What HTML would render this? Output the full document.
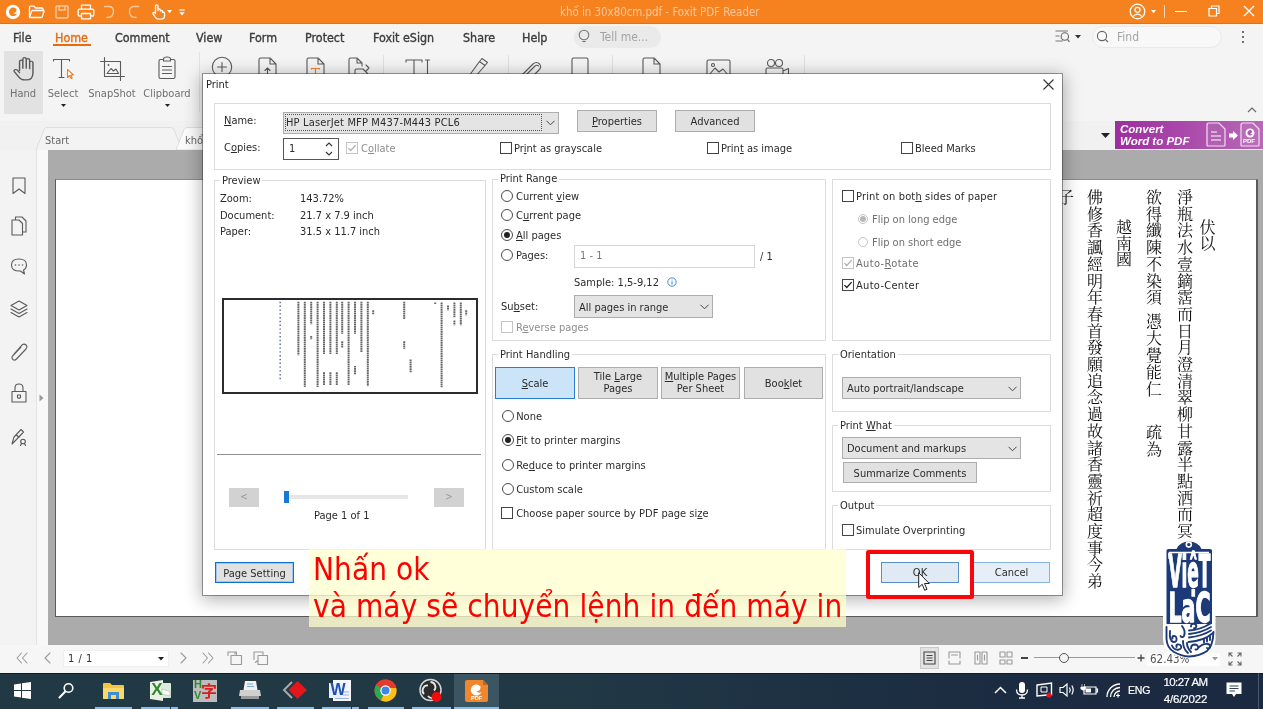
<!DOCTYPE html>
<html lang="vi">
<head>
<meta charset="utf-8">
<title>khổ in 30x80cm.pdf - Foxit PDF Reader</title>
<style>
*{box-sizing:border-box;margin:0;padding:0}
html,body{width:1263px;height:709px;overflow:hidden;background:#ababab}
body{position:relative;will-change:transform;font-family:"DejaVu Sans Condensed","DejaVu Sans","Liberation Sans",sans-serif;font-size:11px;color:#2b2b2b}
.abs{position:absolute;white-space:nowrap}
svg{position:absolute;overflow:visible}
.t{height:14px;line-height:14px}
u{text-decoration:underline;text-underline-offset:1px;text-decoration-thickness:1px}
/* dialog */
#dlg{background:#fff;background-clip:padding-box;border:1px solid rgba(30,30,30,.42);box-shadow:0 3px 16px 1px rgba(0,0,0,.30)}
.gb{border:1px solid #dcdcdc}
.lg{background:#fff;padding:0 2px}
.btn{background:#e1e1e1;border:1px solid #adadad;text-align:center}
.cb{border:1px solid #444;background:#fff}
.cb.dis{border-color:#c4c4c4}
.rd{border:1px solid #4a4a4a;border-radius:50%;background:#fff}
.rd.dis{border-color:#c4c4c4}
.dot{border-radius:50%;background:#222}
.combo{background:#e4e4e4;border:1px solid #adadad}
.dis{color:#8f8f8f}
/* app */
.menu{font-size:12.4px;color:#3c3c3c;height:26px;line-height:27px;-webkit-text-stroke:0.35px #3c3c3c}
.rl{font-size:11px;color:#707070;text-align:center}

</style>
</head>
<body>
<div class="abs" style="left:0px;top:0px;width:1263px;height:24px;background:#f5821f;border-bottom:1.5px solid #de730f"></div>
<div class="abs" style="left:560px;top:0;height:24px;line-height:25px;font-size:11.4px;color:#fac79c">khổ in 30x80cm.pdf - Foxit PDF Reader</div>
<svg style="left:5px;top:4px;" width="16" height="16" viewBox="0 0 16 16"><circle cx="8" cy="8" r="7.2" fill="#fff"/><path d="M11.6 5.2A4.3 4.3 0 1 0 12.2 9.6C10.8 10.6 9 10 8.4 8.8C9.6 9.3 11.6 8.2 11.6 5.2Z" fill="#f5821f"/></svg>
<svg style="left:28px;top:5px;" width="17" height="14" viewBox="0 0 17 14"><path d="M1.5 12.5V2.2Q1.5 1.2 2.5 1.2H6L7.5 3H14Q15 3 15 4V5.5M1.5 12.5L3.6 6.4Q3.9 5.5 4.8 5.5H15.3Q16.3 5.5 16 6.5L14.3 11.7Q14 12.5 13 12.5Z" fill="none" stroke="#fff" stroke-width="1.3" stroke-linecap="round" stroke-linejoin="round"/></svg>
<svg style="left:55px;top:5px;" width="14" height="14" viewBox="0 0 14 14"><path d="M1 2Q1 1 2 1H12Q13 1 13 2V12Q13 13 12 13H2Q1 13 1 12ZM4 1V5H10V1" fill="none" stroke="#fbc89a" stroke-width="1.4" stroke-linecap="round" stroke-linejoin="round"/></svg>
<svg style="left:77px;top:4px;" width="18" height="16" viewBox="0 0 18 16"><path d="M4.5 5V1.2H13.5V5M4.5 12H2.5Q1.2 12 1.2 10.7V6.5Q1.2 5.2 2.5 5.2H15.5Q16.8 5.2 16.8 6.5V10.7Q16.8 12 15.500 12H13.5M4.500 9.500H13.5V14.800H4.500Z" fill="none" stroke="#fff" stroke-width="1.3" stroke-linecap="round" stroke-linejoin="round"/></svg>
<svg style="left:103px;top:5px;" width="12" height="14" viewBox="0 0 12 14"><path d="M1.5 1.5H5.500Q10.500 1.500 10.500 6.500Q10.500 12.500 4 12.500" fill="none" stroke="#fbc89a" stroke-width="1.4" stroke-linecap="round" stroke-linejoin="round"/></svg>
<svg style="left:128px;top:5px;" width="12" height="14" viewBox="0 0 12 14"><path d="M10.500 1.500H6.500Q1.500 1.500 1.500 6.500Q1.500 12.500 8 12.500" fill="none" stroke="#fbc89a" stroke-width="1.4" stroke-linecap="round" stroke-linejoin="round"/></svg>
<svg style="left:150px;top:3px;" width="18" height="18" viewBox="0 0 18 18"><path d="M5.500 10V3.200Q5.500 1.800 6.800 1.800Q8 1.800 8 3.200V7.500M8 7.500V6.300Q9.300 5.300 10.300 6.500V8M10.300 8Q11.600 7 12.600 8.200V9.500Q14.400 8.800 14.600 10.500V12.500Q14.600 16.200 11 16.200H9Q6.500 16.200 5.200 14L3 10.800Q2.600 9.600 3.800 9.400Q4.600 9.400 5.500 10.600" fill="none" stroke="#fff" stroke-width="1.3" stroke-linecap="round" stroke-linejoin="round"/></svg>
<svg style="left:167px;top:9.5px;" width="5" height="3.5" viewBox="0 0 5 3.5"><path d="M0 0H5L2.500 3.200Z" fill="#fff"/></svg>
<svg style="left:179px;top:8.5px;" width="6" height="7" viewBox="0 0 6 7"><path d="M0.300 1H5.700" stroke="#fff" stroke-width="1.200" fill="none"/><path d="M0.300 3.200H5.700L3 6.500Z" fill="#fff"/></svg>
<svg style="left:1129px;top:3px;" width="17" height="17" viewBox="0 0 17 17"><circle cx="8.500" cy="8.500" r="7.300" fill="none" stroke="#fff" stroke-width="1.3" stroke-linecap="round" stroke-linejoin="round"/><circle cx="8.500" cy="6.800" r="2.500" fill="none" stroke="#fff" stroke-width="1.3" stroke-linecap="round" stroke-linejoin="round"/><path d="M3.800 13.600Q8.500 8.500 13.200 13.600" fill="none" stroke="#fff" stroke-width="1.3" stroke-linecap="round" stroke-linejoin="round"/></svg>
<svg style="left:1151px;top:9.5px;" width="5" height="3.5" viewBox="0 0 5 3.5"><path d="M0 0H5L2.500 3.200Z" fill="#fff"/></svg>
<div class="abs" style="left:1164px;top:5px;width:1px;height:13px;background:#fbd9bd"></div>
<div class="abs" style="left:1175px;top:11px;width:12px;height:1px;background:#fff"></div>
<svg style="left:1208px;top:5px;" width="12" height="12" viewBox="0 0 12 12"><path d="M1 3.500H8.500V11H1ZM3.500 3.500V1H11V8.500H8.500" fill="none" stroke="#fff" stroke-width="1.200"/></svg>
<svg style="left:1243px;top:5px;" width="12" height="12" viewBox="0 0 12 12"><path d="M1 1L11 11M11 1L1 11" stroke="#fff" stroke-width="1.300" fill="none"/></svg>
<div class="abs" style="left:0px;top:24px;width:1263px;height:97px;background:#f4f4f4;border-top:1px solid #fdf1e2"></div>
<div class="abs menu" style="left:13px;top:24px">File</div>
<div class="abs menu" style="left:115px;top:24px">Comment</div>
<div class="abs menu" style="left:196px;top:24px">View</div>
<div class="abs menu" style="left:249px;top:24px">Form</div>
<div class="abs menu" style="left:305px;top:24px">Protect</div>
<div class="abs menu" style="left:373px;top:24px">Foxit eSign</div>
<div class="abs menu" style="left:463px;top:24px">Share</div>
<div class="abs menu" style="left:522px;top:24px">Help</div>
<div class="abs menu" style="left:55px;top:24px;color:#ea6b0e;-webkit-text-stroke-color:#ea6b0e">Home</div>
<div class="abs" style="left:53px;top:44px;width:38px;height:2px;background:#ea6b0e"></div>
<div class="abs" style="left:574px;top:26px;width:87px;height:22px;background:#eaeaea;border-radius:11px"></div>
<svg style="left:578px;top:29px;" width="12" height="15" viewBox="0 0 12 15"><circle cx="6" cy="6" r="4.800" fill="none" stroke="#777" stroke-width="1.100"/><path d="M4.300 12.500H7.700" stroke="#777" stroke-width="1.100"/></svg>
<div class="abs" style="left:600px;top:24px;height:26px;line-height:26px;font-size:12px;color:#a3a3a3">Tell me...</div>
<svg style="left:1055px;top:30px;" width="16" height="13" viewBox="0 0 16 13"><path d="M0.500 1H13M0.500 6H4.500M0.500 11H8" stroke="#777" stroke-width="1.100" fill="none"/><circle cx="9.800" cy="6.500" r="3.700" fill="none" stroke="#666" stroke-width="1.100"/><path d="M12.400 9.300L14.500 11.800" stroke="#666" stroke-width="1.200"/></svg>
<svg style="left:1075px;top:35px;" width="6" height="4" viewBox="0 0 6 4"><path d="M0 0H6L3 3.500Z" fill="#333"/></svg>
<div class="abs" style="left:1092px;top:26px;width:130px;height:22px;background:#f8f8f8;border:1px solid #e9e9e9;border-radius:11px"></div>
<svg style="left:1096px;top:30px;" width="13" height="13" viewBox="0 0 13 13"><circle cx="6" cy="6" r="4.600" fill="none" stroke="#666" stroke-width="1.100"/><path d="M9.300 9.300L12 12" stroke="#666" stroke-width="1.200"/></svg>
<div class="abs" style="left:1117px;top:24px;height:26px;line-height:26px;font-size:12px;color:#a3a3a3">Find</div>
<div class="abs" style="left:1242px;top:31px;width:2px;height:2px;background:#444;border-radius:1px"></div>
<div class="abs" style="left:1242px;top:36px;width:2px;height:2px;background:#444;border-radius:1px"></div>
<div class="abs" style="left:1242px;top:41px;width:2px;height:2px;background:#444;border-radius:1px"></div>
<div class="abs" style="left:4px;top:51px;width:39px;height:63px;background:#e2e2e2"></div>
<div class="abs rl" style="left:-12px;top:86px;width:70px;height:16px;line-height:16px">Hand</div>
<div class="abs rl" style="left:28px;top:86px;width:70px;height:16px;line-height:16px">Select</div>
<div class="abs rl" style="left:77px;top:86px;width:70px;height:16px;line-height:16px">SnapShot</div>
<div class="abs rl" style="left:132px;top:86px;width:70px;height:16px;line-height:16px">Clipboard</div>
<svg style="left:60.5px;top:104px;" width="5" height="3" viewBox="0 0 5 3"><path d="M0 0H5L2.500 3Z" fill="#222"/></svg>
<svg style="left:164.5px;top:104px;" width="5" height="3" viewBox="0 0 5 3"><path d="M0 0H5L2.500 3Z" fill="#222"/></svg>
<svg style="left:13px;top:56.5px;" width="21" height="23.5" viewBox="1.500 1 16 21" preserveAspectRatio="none"><path d="M6.500 13V5.200Q6.500 3.800 7.800 3.800Q9 3.800 9 5.200V11M9 11V3Q9 1.600 10.300 1.600Q11.600 1.600 11.600 3V11M11.600 11V3.800Q11.600 2.500 12.900 2.500Q14.200 2.500 14.200 3.800V11.500M14.200 11.500V6Q14.200 4.800 15.400 4.800Q16.700 4.800 16.700 6V15Q16.700 21.500 11.500 21.500H10.500Q7.500 21.500 6 19L2.500 14Q2 12.600 3.200 12.200Q4.300 12 5 13L6.500 15" fill="none" stroke="#5a5a5a" stroke-width="1.1" stroke-linecap="round" stroke-linejoin="round"/></svg>
<svg style="left:52px;top:58px;" width="24" height="22" viewBox="0 0 24 22"><path d="M1.500 3V1.500H17.500V3M9.500 1.500V19.500M7 19.500H12" fill="none" stroke="#5a5a5a" stroke-width="1.1" stroke-linecap="round" stroke-linejoin="round"/><path d="M15.500 11.500V19.500L17.500 17.500L19 20.500L20.200 20L18.800 17H21.500Z" fill="#fff" stroke="#e9822c" stroke-width="1.100" stroke-linejoin="round"/></svg>
<svg style="left:100px;top:57px;" width="25" height="24" viewBox="0 0 25 24"><path d="M4.500 0.500V19.500H24.500M0.500 4.500H20.500V23.500" fill="none" stroke="#5a5a5a" stroke-width="1.1" stroke-linecap="round" stroke-linejoin="round"/><path d="M7 16.500L11 11.500L13.500 14L16 12L18.500 16.500Z" fill="none" stroke="#5a5a5a" stroke-width="1.1" stroke-linecap="round" stroke-linejoin="round"/><circle cx="8.500" cy="8" r="0.900" fill="#5a5a5a"/></svg>
<svg style="left:158px;top:56px;" width="18" height="24" viewBox="0 0 18 24"><path d="M5 3.500H2.500Q1 3.500 1 5V21Q1 22.500 2.500 22.500H15.500Q17 22.500 17 21V5Q17 3.500 15.500 3.500H13M5.500 5V3Q5.500 1 9 1Q12.500 1 12.500 3V5ZM4.500 10.500H13.500M4.500 14H13.500M4.500 17.500H13.500" fill="none" stroke="#5a5a5a" stroke-width="1.1" stroke-linecap="round" stroke-linejoin="round"/></svg>
<div class="abs" style="left:199px;top:52px;width:1px;height:60px;background:#e3e3e3"></div>
<svg style="left:211px;top:56px;" width="22" height="22" viewBox="0 0 22 22"><circle cx="11" cy="11" r="9.700" fill="none" stroke="#5a5a5a" stroke-width="1.1" stroke-linecap="round" stroke-linejoin="round"/><path d="M11 6.500V15.500M6.500 11H15.500" fill="none" stroke="#5a5a5a" stroke-width="1.1" stroke-linecap="round" stroke-linejoin="round"/></svg>
<svg style="left:258px;top:57px;" width="19" height="24" viewBox="0 0 19 24"><path d="M1 22V2.500Q1 1 2.500 1H12L18 7V22M12 1V7H18M9.500 19V11M7 13.500L9.500 11L12 13.500" fill="none" stroke="#5a5a5a" stroke-width="1.1" stroke-linecap="round" stroke-linejoin="round"/></svg>
<svg style="left:306px;top:57px;" width="19" height="24" viewBox="0 0 19 24"><path d="M1 22V2.500Q1 1 2.500 1H12L18 7V22M12 1V7H18" fill="none" stroke="#5a5a5a" stroke-width="1.1" stroke-linecap="round" stroke-linejoin="round"/><path d="M5.500 12.500V11.500H13.500V12.500M9.500 11.500V19" fill="none" stroke="#e9822c" stroke-width="1.200"/></svg>
<svg style="left:348px;top:57px;" width="22" height="24" viewBox="0 0 22 24"><path d="M1 22V2.500Q1 1 2.500 1H9L14 6V9M9 1V6H14M7 22V13.500Q7 12 8.500 12H15L19.500 16.500V22M21 11L18 8M21 11L18 14" fill="none" stroke="#5a5a5a" stroke-width="1.1" stroke-linecap="round" stroke-linejoin="round"/></svg>
<div class="abs" style="left:383px;top:55px;width:1px;height:20px;background:#e0e0e0"></div>
<svg style="left:405px;top:59px;" width="28" height="18" viewBox="0 0 28 18"><path d="M1 3V1H17V3M9 1V18M22.500 1V18M20.500 1H24.500" fill="none" stroke="#5a5a5a" stroke-width="1.1" stroke-linecap="round" stroke-linejoin="round"/></svg>
<svg style="left:466px;top:57px;" width="24" height="20" viewBox="0 0 24 20"><path d="M3 19L13.500 4.500L19 8.500L9 20M13.500 4.500L16 1.500L21.500 5.500L19 8.500" fill="none" stroke="#5a5a5a" stroke-width="1.1" stroke-linecap="round" stroke-linejoin="round"/></svg>
<div class="abs" style="left:508px;top:55px;width:1px;height:20px;background:#e0e0e0"></div>
<svg style="left:518px;top:59px;" width="26" height="18" viewBox="0 0 26 18"><path d="M3 17L15 5Q18.500 2 21.500 5Q24 8 21 11L12 20M7 17L17 7Q19 5.500 20.500 7" fill="none" stroke="#5a5a5a" stroke-width="1.1" stroke-linecap="round" stroke-linejoin="round"/></svg>
<svg style="left:571px;top:57px;" width="18" height="22" viewBox="0 0 18 22"><path d="M1 22V2.500Q1 1 2.500 1H15.500Q17 1 17 2.500V22" fill="none" stroke="#5a5a5a" stroke-width="1.1" stroke-linecap="round" stroke-linejoin="round"/></svg>
<div class="abs" style="left:612px;top:55px;width:1px;height:20px;background:#e0e0e0"></div>
<svg style="left:642px;top:57px;" width="19" height="22" viewBox="0 0 19 22"><path d="M1 22V2.500Q1 1 2.500 1H12L18 7V22M12 1V7H18" fill="none" stroke="#5a5a5a" stroke-width="1.1" stroke-linecap="round" stroke-linejoin="round"/></svg>
<svg style="left:706px;top:59px;" width="25" height="18" viewBox="0 0 25 18"><path d="M1 18V2.500Q1 1 2.500 1H22.500Q24 1 24 2.500V18M3 16L9 9L13 13L17 10L22 16" fill="none" stroke="#5a5a5a" stroke-width="1.1" stroke-linecap="round" stroke-linejoin="round"/><circle cx="7" cy="6" r="1.500" fill="none" stroke="#5a5a5a" stroke-width="1.1" stroke-linecap="round" stroke-linejoin="round"/></svg>
<svg style="left:764px;top:58px;" width="26" height="18" viewBox="0 0 26 18"><circle cx="7" cy="5" r="3.500" fill="none" stroke="#5a5a5a" stroke-width="1.1" stroke-linecap="round" stroke-linejoin="round"/><circle cx="15" cy="5" r="3.500" fill="none" stroke="#5a5a5a" stroke-width="1.1" stroke-linecap="round" stroke-linejoin="round"/><path d="M2 18V11.500Q2 10 3.500 10H17.500Q19 10 19 11.500V18M19 13L24.500 10.500V18" fill="none" stroke="#5a5a5a" stroke-width="1.1" stroke-linecap="round" stroke-linejoin="round"/></svg>
<div class="abs" style="left:804px;top:55px;width:1px;height:20px;background:#e0e0e0"></div>
<svg style="left:1247px;top:107px;" width="10" height="6" viewBox="0 0 10 6"><path d="M1 5L5 1L9 5" stroke="#666" stroke-width="1.100" fill="none"/></svg>
<div class="abs" style="left:0px;top:121px;width:1263px;height:29px;background:#f1f1f1"></div>
<svg style="left:0px;top:121px;" width="210" height="29" viewBox="0 0 210 29"><path d="M36 29L44 8.500Q45 6.500 47 6.500H171Q173 6.500 174 8.500L182 29" fill="#f3f3f3" stroke="#dedede" stroke-width="1"/><path d="M176 29L184 8.500Q185 6.500 187 6.500H210V29Z" fill="#fbfbfb" stroke="#dedede" stroke-width="1"/></svg>
<div class="abs" style="left:45px;top:132.8px;height:16px;line-height:16px;font-size:11px;color:#666">Start</div>
<div class="abs" style="left:185px;top:132.8px;height:16px;line-height:16px;font-size:11px;color:#666">khổ in 30x80cm.pdf</div>
<svg style="left:1101px;top:133px;" width="9" height="6" viewBox="0 0 9 6"><path d="M0 0H9L4.500 5Z" fill="#222"/></svg>
<div class="abs" style="left:1115px;top:121px;width:148px;height:28px;background:linear-gradient(90deg,#9d2e9f,#b868b7)"></div>
<div class="abs" style="left:1120px;top:123px;font-family:'Liberation Sans',sans-serif;font-weight:bold;font-style:italic;font-size:11.5px;line-height:12px;color:#fff">Convert<br>Word to PDF</div>
<svg style="left:1206px;top:122px;" width="20" height="25" viewBox="0 0 20 25"><path d="M1 23V3Q1 1 3 1H13L19 7V23Q19 24 18 24H2Q1 24 1 23Z" fill="#b15fb0" stroke="#f3def2" stroke-width="1.200"/><path d="M5 10H11M5 14H15M5 18H15" stroke="#fff" stroke-width="1.200"/></svg>
<svg style="left:1229px;top:131px;" width="9" height="9" viewBox="0 0 9 9"><path d="M0 2.500H4V0L9 4.500L4 9V6.500H0Z" fill="#fff"/></svg>
<svg style="left:1240px;top:122px;" width="20" height="25" viewBox="0 0 20 25"><path d="M1 23V3Q1 1 3 1H13L19 7V23Q19 24 18 24H2Q1 24 1 23Z" fill="#b96cb8" stroke="#f3def2" stroke-width="1.200"/><circle cx="10" cy="11" r="4.500" fill="#fff"/><path d="M12 9A2.600 2.600 0 1 0 12.500 12C11.500 12.500 10.500 12 10.200 11.300C11 11.500 12 11 12 9Z" fill="#b653b4"/></svg>
<div class="abs" style="left:1243px;top:138px;font-family:'Liberation Sans',sans-serif;font-weight:bold;font-size:6px;line-height:7px;color:#fff">PDF</div>
<div class="abs" style="left:0px;top:150px;width:36px;height:495px;background:#f3f3f3"></div>
<div class="abs" style="left:36px;top:150px;width:12px;height:495px;background:#f8f8f8;border-left:1px solid #e4e4e4"></div>
<svg style="left:12px;top:177px;" width="14" height="18" viewBox="0 0 14 18"><path d="M1 1H13V16.500L7 12L1 16.500Z" fill="none" stroke="#5a5a5a" stroke-width="1.1" stroke-linecap="round" stroke-linejoin="round"/></svg>
<svg style="left:11px;top:216px;" width="16" height="20" viewBox="0 0 16 20"><path d="M4.500 4V1H11L15 5V16H11.500M1 4H8L11.500 7.500V19H1Z" fill="none" stroke="#5a5a5a" stroke-width="1.1" stroke-linecap="round" stroke-linejoin="round"/></svg>
<svg style="left:10px;top:258px;" width="18" height="18" viewBox="0 0 18 18"><path d="M9 1Q16.500 1 16.500 7Q16.500 10.500 13.500 12L14.500 16L10.500 13Q1.500 13.500 1.500 7Q1.500 1 9 1Z" fill="none" stroke="#5a5a5a" stroke-width="1.1" stroke-linecap="round" stroke-linejoin="round"/><circle cx="5.500" cy="7" r="0.800" fill="#5a5a5a"/><circle cx="9" cy="7" r="0.800" fill="#5a5a5a"/><circle cx="12.500" cy="7" r="0.800" fill="#5a5a5a"/></svg>
<svg style="left:10px;top:300px;" width="18" height="18" viewBox="0 0 18 18"><path d="M9 1L17 5.500L9 10L1 5.500ZM1 9L9 13.500L17 9M1 12.500L9 17L17 12.500" fill="none" stroke="#5a5a5a" stroke-width="1.1" stroke-linecap="round" stroke-linejoin="round"/></svg>
<svg style="left:10px;top:342px;" width="18" height="20" viewBox="0 0 18 20"><path d="M4 12L11.500 3.500Q14 1 16 3Q18 5 15.500 7.500L6.500 17Q4.500 19 2.800 17.300Q1 15.500 3 13.500L11 5" fill="none" stroke="#5a5a5a" stroke-width="1.1" stroke-linecap="round" stroke-linejoin="round"/></svg>
<svg style="left:11px;top:383px;" width="16" height="20" viewBox="0 0 16 20"><path d="M1 8.500H15V19H1ZM4 8.500V5Q4 1 8 1Q12 1 12 5V8.500" fill="none" stroke="#5a5a5a" stroke-width="1.1" stroke-linecap="round" stroke-linejoin="round"/><path d="M6.500 12H9.500V14.500Q8 16 6.500 14.500Z" fill="none" stroke="#5a5a5a" stroke-width="1.1" stroke-linecap="round" stroke-linejoin="round"/></svg>
<svg style="left:10px;top:428px;" width="18" height="18" viewBox="0 0 18 18"><path d="M2 16L4 9L11 1.500L13.500 4L6.500 11.500ZM6 6.500L9 9.500" fill="none" stroke="#5a5a5a" stroke-width="1.1" stroke-linecap="round" stroke-linejoin="round"/><circle cx="13" cy="13.500" r="2.300" fill="none" stroke="#5a5a5a" stroke-width="1.1" stroke-linecap="round" stroke-linejoin="round"/><path d="M11.500 15.500L10.500 17.500M14.500 15.500L15.500 17.500" fill="none" stroke="#5a5a5a" stroke-width="1.1" stroke-linecap="round" stroke-linejoin="round"/></svg>
<svg style="left:39px;top:394px;" width="5" height="8" viewBox="0 0 5 8"><path d="M0.500 0.500L4.500 4L0.500 7.500Z" fill="#999"/></svg>
<div class="abs" style="left:48px;top:150px;width:1215px;height:495px;background:#ababab"></div>
<div class="abs" style="left:55px;top:179px;width:1203px;height:438px;background:#fff;border:1px solid #5a5a5a;border-top-color:#8c8c8c;border-right-width:2px"></div>
<div class="abs" style="left:1198.5px;top:218.5px;font-family:'Noto Serif CJK SC','Noto Serif CJK TC','Noto Sans CJK TC',serif;font-size:16px;color:#111;width:18px;text-align:center;white-space:normal;line-height:16.7px;font-weight:400;line-height:16px">伏<br>以</div>
<div class="abs" style="left:1176px;top:189px;font-family:'Noto Serif CJK SC','Noto Serif CJK TC','Noto Sans CJK TC',serif;font-size:16px;color:#111;width:18px;text-align:center;white-space:normal;line-height:16.7px;font-weight:400;">淨<br>瓶<br>法<br>水<br>壹<br>鏑<br>霑<br>而<br>日<br>月<br>澄<br>清<br>翠<br>柳<br>甘<br>露<br>半<br>點<br>洒<br>而<br>冥</div>
<div class="abs" style="left:1145px;top:189px;font-family:'Noto Serif CJK SC','Noto Serif CJK TC','Noto Sans CJK TC',serif;font-size:16px;color:#111;width:18px;text-align:center;white-space:normal;line-height:16.7px;font-weight:400;">欲<br>得<br>纖<br>陳<br>不<br>染<br>須</div>
<div class="abs" style="left:1145px;top:312px;font-family:'Noto Serif CJK SC','Noto Serif CJK TC','Noto Sans CJK TC',serif;font-size:16px;color:#111;width:18px;text-align:center;white-space:normal;line-height:16.7px;font-weight:400;line-height:17px">憑<br>大<br>覺<br>能<br>仁</div>
<div class="abs" style="left:1145px;top:424px;font-family:'Noto Serif CJK SC','Noto Serif CJK TC','Noto Sans CJK TC',serif;font-size:16px;color:#111;width:18px;text-align:center;white-space:normal;line-height:16.7px;font-weight:400;">疏<br>為</div>
<div class="abs" style="left:1115px;top:219px;font-family:'Noto Serif CJK SC','Noto Serif CJK TC','Noto Sans CJK TC',serif;font-size:16px;color:#111;width:18px;text-align:center;white-space:normal;line-height:16.7px;font-weight:400;line-height:16px">越<br>南<br>國</div>
<div class="abs" style="left:1086px;top:189px;font-family:'Noto Serif CJK SC','Noto Serif CJK TC','Noto Sans CJK TC',serif;font-size:16px;color:#111;width:18px;text-align:center;white-space:normal;line-height:16.7px;font-weight:400;">佛<br>修<br>香<br>諷<br>經<br>明<br>年<br>春<br>首<br>發<br>願<br>追<br>念<br>過<br>故<br>諸<br>香<br>靈<br>祈<br>超<br>度<br>事<br>今<br>弟</div>
<div class="abs" style="left:1057px;top:189px;font-family:'Noto Serif CJK SC','Noto Serif CJK TC','Noto Sans CJK TC',serif;font-size:16px;color:#111;width:18px;text-align:center;white-space:normal;line-height:16.7px;font-weight:400;">子</div>
<div class="abs" style="left:0px;top:645px;width:1263px;height:28px;background:#f6f6f6"></div>
<svg style="left:16px;top:652px;" width="12" height="12" viewBox="0 0 12 12"><path d="M5.500 1L1 6L5.500 11M11 1L6.500 6L11 11" fill="none" stroke="#9a9a9a" stroke-width="1.100" stroke-linecap="round" stroke-linejoin="round"/></svg>
<svg style="left:44px;top:652px;" width="7" height="12" viewBox="0 0 7 12"><path d="M6 1L1 6L6 11" fill="none" stroke="#9a9a9a" stroke-width="1.100" stroke-linecap="round" stroke-linejoin="round"/></svg>
<div class="abs" style="left:63px;top:649.5px;width:105.5px;height:17px;background:#fff;border:1px solid #efefef"></div>
<div class="abs" style="left:68px;top:651px;height:16px;line-height:16px;font-size:11px;color:#333;letter-spacing:0.500px">1 / 1</div>
<svg style="left:158px;top:657px;" width="6" height="4" viewBox="0 0 6 4"><path d="M0 0H6L3 3.500Z" fill="#222"/></svg>
<svg style="left:180px;top:652px;" width="7" height="12" viewBox="0 0 7 12"><path d="M1 1L6 6L1 11" fill="none" stroke="#9a9a9a" stroke-width="1.100" stroke-linecap="round" stroke-linejoin="round"/></svg>
<svg style="left:202px;top:652px;" width="12" height="12" viewBox="0 0 12 12"><path d="M1 1L5.500 6L1 11M6.500 1L11 6L6.500 11" fill="none" stroke="#9a9a9a" stroke-width="1.100" stroke-linecap="round" stroke-linejoin="round"/></svg>
<svg style="left:227px;top:650px;" width="16" height="16" viewBox="0 0 16 16"><path d="M1 5.500V2H9.500V5.500M4 5.500H14.500V14.500H4ZM8 2V4" fill="none" stroke="#9a9a9a" stroke-width="1.100" stroke-linecap="round" stroke-linejoin="round"/></svg>
<svg style="left:253px;top:650px;" width="16" height="16" viewBox="0 0 16 16"><path d="M1 9.500V2H10V4.500M5 5.500H14.500V14.500H5ZM4 11L2.500 12.500" fill="none" stroke="#9a9a9a" stroke-width="1.100" stroke-linecap="round" stroke-linejoin="round"/></svg>
<div class="abs" style="left:920px;top:647px;width:19px;height:22px;background:#e2e2e2;border:1px solid #c9c9c9"></div>
<svg style="left:923px;top:651px;" width="13" height="14" viewBox="0 0 13 14"><path d="M1 1H12V13H1ZM3.500 4.500H9.500M3.500 7H9.500M3.500 9.500H9.500" fill="none" stroke="#444" stroke-width="1.100"/></svg>
<svg style="left:948px;top:651px;" width="14" height="14" viewBox="0 0 14 14"><path d="M1 7V1H12V7M1 10V13H12V10M3.500 4H9.500" fill="none" stroke="#9a9a9a" stroke-width="1.100" stroke-linecap="round" stroke-linejoin="round"/></svg>
<svg style="left:974px;top:651px;" width="14" height="14" viewBox="0 0 14 14"><path d="M1 1H6V13H1ZM8 1H13V13H8ZM3.500 4V9M10.500 4V9" fill="none" stroke="#9a9a9a" stroke-width="1.100" stroke-linecap="round" stroke-linejoin="round"/></svg>
<svg style="left:999px;top:651px;" width="14" height="14" viewBox="0 0 14 14"><path d="M1 1H6V6H1ZM8 1H13V6H8ZM1 9H6V13H1ZM8 9H13V13H8Z" fill="none" stroke="#9a9a9a" stroke-width="1.100" stroke-linecap="round" stroke-linejoin="round"/></svg>
<div class="abs" style="left:1021px;top:657px;width:7px;height:1.5px;background:#444"></div>
<div class="abs" style="left:1034px;top:657px;width:101px;height:1px;background:#9a9a9a"></div>
<div class="abs" style="left:1059px;top:653px;width:10px;height:10px;background:#f4f4f4;border:1px solid #555;border-radius:50%"></div>
<svg style="left:1137px;top:654px;" width="8" height="8" viewBox="0 0 8 8"><path d="M4 0.500V7.500M0.500 4H7.500" stroke="#444" stroke-width="1.300" fill="none"/></svg>
<div class="abs" style="left:1147px;top:653px;width:73px;height:12.5px;background:#fdfdfd"></div>
<div class="abs" style="left:1150px;top:651px;height:16px;line-height:16px;font-size:11.500px;color:#555">62.43%</div>
<svg style="left:1212px;top:657px;" width="6" height="4" viewBox="0 0 6 4"><path d="M0 0H6L3 3.500Z" fill="#999"/></svg>
<svg style="left:1228px;top:652px;" width="14" height="14" viewBox="0 0 14 14"><path d="M1 4.500V1H4.500M9.500 1H13V4.500M13 9.500V13H9.500M4.500 13H1V9.500M1.500 1.500L4.500 4.500M12.500 1.500L9.500 4.500M12.500 12.500L9.500 9.500M1.500 12.500L4.500 9.500" fill="none" stroke="#666" stroke-width="1.100"/></svg>
<div class="abs" style="left:0px;top:672.5px;width:1263px;height:36.5px;background:linear-gradient(90deg,#213845 0%,#213845 45%,#1b2b41 80%,#1b2a40 100%);border-top:1px solid #101c24"></div>
<div class="abs" style="left:95px;top:706.5px;width:37px;height:2.5px;background:#86bdea"></div>
<div class="abs" style="left:140.5px;top:706.5px;width:37.0px;height:2.5px;background:#86bdea"></div>
<div class="abs" style="left:170px;top:706.5px;width:1px;height:2.5px;background:#1f3441"></div>
<div class="abs" style="left:231px;top:706.5px;width:38px;height:2.5px;background:#86bdea"></div>
<div class="abs" style="left:277px;top:706.5px;width:37px;height:2.5px;background:#86bdea"></div>
<div class="abs" style="left:322px;top:706.5px;width:37px;height:2.5px;background:#86bdea"></div>
<div class="abs" style="left:351px;top:706.5px;width:1px;height:2.5px;background:#1f3441"></div>
<div class="abs" style="left:367.5px;top:706.5px;width:36.5px;height:2.5px;background:#86bdea"></div>
<div class="abs" style="left:412px;top:706.5px;width:39px;height:2.5px;background:#86bdea"></div>
<div class="abs" style="left:454px;top:673.5px;width:45px;height:35.5px;background:#3c5563"></div>
<div class="abs" style="left:454px;top:706.5px;width:45px;height:2.5px;background:#86bdea"></div>
<svg style="left:14px;top:682px;" width="17" height="17" viewBox="0 0 17 17"><path d="M0 2.400L7 1.400V8H0ZM8 1.200L17 0V8H8ZM0 9H7V15.600L0 14.600ZM8 9H17V17L8 15.800Z" fill="#fff"/></svg>
<svg style="left:58px;top:682px;" width="17" height="17" viewBox="0 0 17 17"><circle cx="10.500" cy="6" r="4.300" fill="none" stroke="#fff" stroke-width="1.600"/><path d="M7.300 9.500L1.500 15.500" stroke="#fff" stroke-width="2" stroke-linecap="round"/></svg>
<svg style="left:103px;top:682px;" width="22" height="18" viewBox="0 0 22 18"><path d="M0 2Q0 1 1 1H7L9 3H20Q21 3 21 4V16Q21 17 20 17H1Q0 17 0 16Z" fill="#f5c443"/><path d="M0 6H21V16Q21 17 20 17H1Q0 17 0 16Z" fill="#fbd867"/><path d="M5 10H16V17H5Z" fill="#3d8fd1"/><path d="M8 13H13V17H8Z" fill="#fbd867"/></svg>
<svg style="left:148px;top:680px;" width="23" height="21" viewBox="0 0 23 21"><path d="M2 2L15 0V21L2 19Z" fill="#e9f1e6"/><path d="M13 3H22Q23 3 23 4V17Q23 18 22 18H13Z" fill="#dfe9dc"/><path d="M14 9L22 11.500V16L14 14Z" fill="#fff" stroke="#9bb79a" stroke-width="0.600"/></svg>
<div class="abs" style="left:150px;top:680px;width:14px;height:20px;line-height:20px;font-family:'Liberation Sans',sans-serif;font-weight:bold;font-size:17px;color:#2f8a2c;text-align:center">X</div>
<div class="abs" style="left:193px;top:680px;width:24px;height:22px;background:#bdbdbd"></div>
<div class="abs" style="left:194px;top:679px;font-family:'Liberation Sans',sans-serif;font-weight:bold;font-size:11px;line-height:11px;color:#2c8b2c">H<br>V</div>
<div class="abs" style="left:201px;top:680px;font-family:'Noto Sans CJK TC','Noto Sans CJK SC',sans-serif;font-weight:bold;font-size:16px;line-height:20px;color:#e01b1b">字</div>
<svg style="left:239px;top:681px;" width="22" height="19" viewBox="0 0 22 19"><path d="M6 0H17L18.500 9H4.500Z" fill="#f2f2f2"/><path d="M1 9H21L22 15H0Z" fill="#cfcfcf"/><path d="M2 15H20V18H2Z" fill="#9a9a9a"/><path d="M8 3H14M8 5.500H15" stroke="#7fa6d8" stroke-width="1"/></svg>
<svg style="left:283px;top:681px;" width="25" height="18" viewBox="0 0 25 18"><path d="M9 1L1 9L9 17" fill="none" stroke="#a9a9a9" stroke-width="2"/><path d="M14.500 0L24 9L14.500 18L5.500 9Z" fill="#e3161b"/></svg>
<svg style="left:329px;top:680px;" width="23" height="21" viewBox="0 0 23 21"><path d="M4 0H22V21H4Z" fill="#f4f6fb"/><path d="M0 3H13V18H0Z" fill="#e8eefb"/><path d="M14 12H20M14 15H20M6 18.500H20" stroke="#9fb2d8" stroke-width="1"/></svg>
<div class="abs" style="left:329px;top:680px;width:18px;height:20px;line-height:20px;font-family:'Liberation Sans',sans-serif;font-weight:bold;font-size:16px;color:#1f4fb0;text-align:center">W</div>
<svg style="left:374px;top:679px;" width="23" height="23" viewBox="0 0 23 23"><circle cx="11.500" cy="11.500" r="11" fill="#e33b2e"/><path d="M11.500 11.500L2 6A11 11 0 0 0 7 21.500Z" fill="#2da94f"/><path d="M11.500 11.500L7 21.500A11 11 0 0 0 22.300 9H11.500Z" fill="#fbc116"/><path d="M2 6A11 11 0 0 1 22.300 9H11.500Z" fill="#e33b2e"/><circle cx="11.500" cy="11.500" r="5.200" fill="#fff"/><circle cx="11.500" cy="11.500" r="4" fill="#3f86e8"/></svg>
<svg style="left:419px;top:679px;" width="24" height="24" viewBox="0 0 24 24"><circle cx="11.500" cy="11" r="10.500" fill="#2b2b2b" stroke="#d6d6d6" stroke-width="1.500"/><path d="M11.500 3A5 5 0 0 1 15 11.500M5 15A5 5 0 0 1 9 6.500M18 14A5 5 0 0 1 9 17" fill="none" stroke="#e9e9e9" stroke-width="1.800"/><circle cx="17.500" cy="18" r="5" fill="#f10d0d"/></svg>
<svg style="left:465px;top:680px;" width="24" height="22" viewBox="0 0 24 22"><path d="M2 0H18L23 5V20Q23 22 21 22H2Q0 22 0 20V2Q0 0 2 0Z" fill="#f0872c"/><path d="M18 0L23 5H18Z" fill="#c96414"/><path d="M15.500 6.500A5.500 5.500 0 1 0 16.500 12C15 13.300 12.300 12.800 11.500 11C13.500 11.800 15.800 10 15.500 6.500Z" fill="#fff"/></svg>
<div class="abs" style="left:471px;top:695px;font-family:'Liberation Sans',sans-serif;font-weight:bold;font-size:5.500px;line-height:6px;color:#fff">PDF</div>
<svg style="left:994px;top:686px;" width="13" height="8" viewBox="0 0 13 8"><path d="M1 7L6.500 1.500L12 7" fill="none" stroke="#fff" stroke-width="1.500"/></svg>
<svg style="left:1015px;top:682px;" width="14" height="17" viewBox="0 0 14 17"><path d="M4 3Q4 0 7 0Q10 0 10 3V8Q10 11 7 11Q4 11 4 8Z" fill="#fff"/><path d="M1.500 7.500Q1.500 13 7 13Q12.500 13 12.500 7.500M7 13V16M4 16H10" fill="none" stroke="#fff" stroke-width="1.300"/></svg>
<svg style="left:1036px;top:682px;" width="18" height="16" viewBox="0 0 18 16"><path d="M1 3L15.500 1V12.500L1 14Z" fill="none" stroke="#fff" stroke-width="1.400"/><path d="M5 5H11V10H5Z" fill="none" stroke="#fff" stroke-width="1"/><circle cx="13" cy="13" r="2.600" fill="#e8141c"/></svg>
<svg style="left:1059px;top:682px;" width="17" height="16" viewBox="0 0 17 16"><path d="M1 5.500H4L8 2V14L4 10.500H1Z" fill="none" stroke="#fff" stroke-width="1.200"/><path d="M10.500 5.500Q12 8 10.500 10.500M12.800 3.500Q15.500 8 12.800 12.500" fill="none" stroke="#fff" stroke-width="1.200"/></svg>
<svg style="left:1080px;top:684px;" width="18" height="12" viewBox="0 0 18 12"><path d="M4 3H16V10H4ZM16 5H17.500V8H16Z" fill="none" stroke="#fff" stroke-width="1.200"/><path d="M5.500 4.500H11V8.500H5.500Z" fill="#fff"/><path d="M2 0V3M4.500 0V3M0.800 3H5.700V5Q3.300 7.500 0.800 5Z" fill="#fff" stroke="#fff" stroke-width="0.600"/></svg>
<svg style="left:1106px;top:683px;" width="15" height="15" viewBox="0 0 15 15"><path d="M1 14A13 13 0 0 1 14 1" fill="none" stroke="#fff" stroke-width="1.300"/><path d="M4.500 14A9.500 9.500 0 0 1 14 4.500" fill="none" stroke="#fff" stroke-width="1.300"/><path d="M8 14A6 6 0 0 1 14 8" fill="none" stroke="#fff" stroke-width="1.300"/><path d="M10 12.500H14M12 10.500V14.500" stroke="#fff" stroke-width="1.200"/></svg>
<div class="abs" style="left:1128px;top:683px;font-family:'Liberation Sans',sans-serif;color:#fff;font-size:11.500px;height:14px;line-height:14px;-webkit-text-stroke:0.200px #fff;font-size:10.500px;letter-spacing:-0.200px">ENG</div>
<div class="abs" style="left:1163px;top:675px;width:45px;text-align:center;font-family:'Liberation Sans',sans-serif;color:#fff;font-size:11.500px;height:14px;line-height:14px;-webkit-text-stroke:0.200px #fff;letter-spacing:-0.550px">10:27 AM</div>
<div class="abs" style="left:1163px;top:692px;width:45px;text-align:center;font-family:'Liberation Sans',sans-serif;color:#fff;font-size:11.500px;height:14px;line-height:14px;-webkit-text-stroke:0.200px #fff;letter-spacing:-0.150px">4/6/2022</div>
<svg style="left:1226px;top:682px;" width="16" height="16" viewBox="0 0 16 16"><path d="M0.500 0.500H15.500V12H10L8 15L6 12H0.500Z" fill="#fff"/><path d="M3.500 4H12.500M3.500 6.500H12.500M3.500 9H9" stroke="#1b2b41" stroke-width="0.900"/></svg>
<div class="abs" style="left:1258px;top:673px;width:1px;height:36px;background:#4a5a6c"></div>
<div id="dlg" class="abs" style="left:202px;top:73px;width:861px;height:523px;"></div>
<div class="abs t" style="left:206px;top:78.2px;font-size:11px;color:#222">Print</div>
<svg style="left:1043px;top:79px" width="11" height="11" viewBox="0 0 11 11"><path d="M0.5 0.5L10.5 10.5M10.5 0.5L0.5 10.5" stroke="#333" stroke-width="1.1" fill="none"/></svg>
<div class="abs gb" style="left:214px;top:103px;width:837px;height:67px;"></div>
<div class="abs t" style="left:224px;top:113.7px;"><u>N</u>ame:</div>
<div class="abs combo" style="left:283px;top:111.5px;width:276px;height:22px;line-height:20px;padding-left:4px;padding-top:0.7px"></div>
<svg style="left:546px;top:120px" width="9" height="6" viewBox="0 0 9 6"><path d="M0.5 0.8L4.5 4.8L8.5 0.8" stroke="#444" stroke-width="1" fill="none"/></svg>
<div class="abs" style="left:285px;top:114px;width:257px;height:17px;border:1px dotted #555;line-height:15px;padding-left:0;letter-spacing:0.16px">HP LaserJet MFP M437-M443 PCL6</div>
<div class="abs btn" style="left:577px;top:110px;width:80px;height:22px;line-height:20px;padding-top:0.7px;"><u>P</u>roperties</div>
<div class="abs btn" style="left:675px;top:110px;width:80px;height:22px;line-height:20px;padding-top:0.7px;">Advanced</div>
<div class="abs t" style="left:224px;top:140.7px;">C<u>o</u>pies:</div>
<div class="abs" style="left:283px;top:138px;width:56px;height:22px;border:1px solid #555;background:#fff;line-height:19px;padding-left:5px">1</div>
<svg style="left:325px;top:141px" width="8" height="16" viewBox="0 0 8 16"><path d="M1 5L4 2L7 5M1 11L4 14L7 11" stroke="#333" stroke-width="1.1" fill="none"/></svg>
<div class="abs cb dis" style="left:345.5px;top:142.0px;width:12px;height:12px;"></div>
<svg style="left:345.5px;top:142px" width="12" height="12" viewBox="0 0 11 11"><path d="M2.2 5.6L4.4 7.8L8.8 2.9" stroke="#b0b0b0" stroke-width="1.2" fill="none"/></svg>
<div class="abs t dis" style="left:361px;top:142.2px;">C<u>o</u>llate</div>
<div class="abs cb" style="left:499.5px;top:141.5px;width:12px;height:12px;"></div>
<div class="abs t" style="left:514px;top:141.7px;">Pr<u>i</u>nt as grayscale</div>
<div class="abs cb" style="left:706.5px;top:141.5px;width:12px;height:12px;"></div>
<div class="abs t" style="left:721px;top:141.7px;">Prin<u>t</u> as image</div>
<div class="abs cb" style="left:900.5px;top:141.5px;width:12px;height:12px;"></div>
<div class="abs t" style="left:915px;top:141.7px;">Bleed Marks</div>
<div class="abs gb" style="left:214px;top:180px;width:272px;height:370px;"></div>
<div class="abs t lg" style="left:220px;top:173.7px;">Preview</div>
<div class="abs t" style="left:220px;top:191.7px;">Zoom:</div>
<div class="abs t" style="left:300px;top:191.7px;">143.72%</div>
<div class="abs t" style="left:220px;top:209.2px;">Document:</div>
<div class="abs t" style="left:300px;top:209.2px;">21.7 x 7.9 inch</div>
<div class="abs t" style="left:220px;top:224.7px;">Paper:</div>
<div class="abs t" style="left:300px;top:224.7px;">31.5 x 11.7 inch</div>
<div id="thumb" class="abs" style="left:222px;top:298px;width:256px;height:96px;border:2px solid #2c2c2c;background:#fff"></div>
<svg style="left:222px;top:298px" width="256" height="96" viewBox="0 0 256 96"><path d="M244.2 12.3V17.2M238.8 4.4V27.3M232.4 4.4V19.8M232.4 22.4V27.3M226.0 7.4V12.3M219.6 4.4V89.3M213.2 4.4V6.1M188.6 61.5V74.3M182.2 3.8V20.9M182.2 43.3V50.8M151.2 12.3V16.6M145.8 3.8V88.2M139.4 3.8V54.0M133.0 3.8V35.8M133.0 67.9V76.4M126.6 3.8V87.1M120.2 3.8V35.8M120.2 43.3V49.7M114.8 3.8V56.1M114.8 74.3V87.1M108.4 3.8V56.1M108.4 74.3V87.1M102.0 3.8V56.1M102.0 74.3V87.1M95.6 3.8V89.3M89.2 3.8V26.2M89.2 38.0V41.2M82.8 3.8V89.3M76.4 3.8V57.2" stroke="#333" stroke-width="2" stroke-dasharray="1.7 0.5" fill="none" opacity="0.75"/><path d="M58.2 3.8V81.8" stroke="#4a5a80" stroke-width="1.6" stroke-dasharray="1.4 2.4" fill="none" opacity="0.8"/></svg>
<div class="abs" style="left:217px;top:454px;width:264px;height:1px;background:#8e8e8e"></div>
<div class="abs" style="left:229px;top:488px;width:30px;height:19px;background:#d2d2d2;color:#9a9a9a;text-align:center;line-height:18px;font-size:10px">&lt;</div>
<div class="abs" style="left:434px;top:488px;width:30px;height:19px;background:#d2d2d2;color:#9a9a9a;text-align:center;line-height:18px;font-size:10px">&gt;</div>
<div class="abs" style="left:284px;top:495px;width:124px;height:4px;background:#e6e6e6"></div>
<div class="abs" style="left:284px;top:491px;width:5px;height:12px;background:#1479d7"></div>
<div class="abs t" style="left:314px;top:508.7px;">Page 1 of 1</div>
<div class="abs btn" style="left:215px;top:562px;width:79px;height:21px;line-height:19px;padding-top:0.7px;border:1px solid #0f6fd0;box-shadow:inset 0 0 0 1px #9cc7ee">Page Setting</div>
<div class="abs gb" style="left:492px;top:178.5px;width:334px;height:162.5px;"></div>
<div class="abs t lg" style="left:498px;top:172.2px;">Print Range</div>
<div class="abs rd" style="left:501.0px;top:189.5px;width:12px;height:12px;"></div>
<div class="abs t" style="left:516px;top:189.7px;">Current <u>v</u>iew</div>
<div class="abs rd" style="left:501.0px;top:209.0px;width:12px;height:12px;"></div>
<div class="abs t" style="left:516px;top:209.2px;">C<u>u</u>rrent page</div>
<div class="abs rd" style="left:501.0px;top:228.5px;width:12px;height:12px;"></div>
<div class="abs dot" style="left:504.0px;top:231.5px;width:6px;height:6px;"></div>
<div class="abs t" style="left:516px;top:228.7px;"><u>A</u>ll pages</div>
<div class="abs rd" style="left:501.0px;top:248.5px;width:12px;height:12px;"></div>
<div class="abs t" style="left:516px;top:248.7px;">Pa<u>g</u>es:</div>
<div class="abs" style="left:574px;top:245px;width:181px;height:23px;border:1px solid #d6d6d6;background:#fff;line-height:20px;padding-left:5px;color:#7a7a7a">1 - 1</div>
<div class="abs t" style="left:760px;top:250.2px;">/ 1</div>
<div class="abs t" style="left:574px;top:276.2px;">Sample: 1,5-9,12</div>
<svg style="left:667px;top:277px" width="10" height="10" viewBox="0 0 10 10"><circle cx="5" cy="5" r="4.2" fill="none" stroke="#2f7fd6" stroke-width="0.9"/><path d="M5 4.3V7.4M5 2.6V3.4" stroke="#2f7fd6" stroke-width="1"/></svg>
<div class="abs t" style="left:501px;top:300.2px;">Su<u>b</u>set:</div>
<div class="abs combo" style="left:574px;top:295px;width:139px;height:23px;line-height:21px;padding-left:4px;padding-top:0.7px">All pages in range</div>
<svg style="left:700px;top:304px" width="9" height="6" viewBox="0 0 9 6"><path d="M0.5 0.8L4.5 4.8L8.5 0.8" stroke="#444" stroke-width="1" fill="none"/></svg>
<div class="abs cb dis" style="left:500.5px;top:321.0px;width:12px;height:12px;"></div>
<div class="abs t dis" style="left:516px;top:321.2px;">R<u>e</u>verse pages</div>
<div class="abs gb" style="left:832px;top:178.5px;width:219px;height:162.5px;"></div>
<div class="abs cb" style="left:841.5px;top:189.5px;width:12px;height:12px;"></div>
<div class="abs t" style="left:856px;top:189.7px;letter-spacing:0.15px">Print on bot<u>h</u> sides of paper</div>
<div class="abs rd dis" style="left:857.5px;top:214.0px;width:10px;height:10px;"></div>
<div class="abs dot" style="left:859.5px;top:216.0px;width:6px;height:6px;background:#b8b8b8"></div>
<div class="abs t dis" style="left:872px;top:213.2px;color:#6f6f6f">Flip on long edge</div>
<div class="abs rd dis" style="left:857.5px;top:236.5px;width:10px;height:10px;"></div>
<div class="abs t dis" style="left:872px;top:235.7px;color:#6f6f6f">Flip on short edge</div>
<div class="abs cb dis" style="left:841.5px;top:256.5px;width:12px;height:12px;"></div>
<svg style="left:841.5px;top:256.5px" width="12" height="12" viewBox="0 0 11 11"><path d="M2.2 5.6L4.4 7.8L8.8 2.9" stroke="#b0b0b0" stroke-width="1.2" fill="none"/></svg>
<div class="abs t" style="left:856px;top:256.7px;color:#6f6f6f;letter-spacing:0.35px">Auto-<u>R</u>otate</div>
<div class="abs cb" style="left:841.5px;top:278.5px;width:12px;height:12px;"></div>
<svg style="left:841.5px;top:278.5px" width="12" height="12" viewBox="0 0 11 11"><path d="M2.2 5.6L4.4 7.8L8.8 2.9" stroke="#222" stroke-width="1.2" fill="none"/></svg>
<div class="abs t" style="left:856px;top:278.7px;letter-spacing:0.3px">Auto-Center</div>
<div class="abs gb" style="left:492px;top:354px;width:334px;height:196px;"></div>
<div class="abs t lg" style="left:498px;top:347.7px;">Print Handling</div>
<div class="abs btn" style="left:495px;top:367px;width:80px;height:32px;line-height:30px;padding-top:0.7px;background:#cce4f7;border:1px solid #2a7fd4;line-height:30px"><u>S</u>cale</div>
<div class="abs btn" style="left:578px;top:367px;width:80px;height:32px;line-height:12px;padding-top:3px">Tile <u>L</u>arge<br>Pages</div>
<div class="abs btn" style="left:661px;top:367px;width:79px;height:32px;line-height:12px;padding-top:3px"><u>M</u>ultiple Pages<br>Per Sheet</div>
<div class="abs btn" style="left:744px;top:367px;width:79px;height:32px;line-height:30px;padding-top:0.7px;line-height:30px">Boo<u>k</u>let</div>
<div class="abs rd" style="left:501.6px;top:409.5px;width:12px;height:12px;"></div>
<div class="abs t" style="left:516.2px;top:409.7px;">None</div>
<div class="abs rd" style="left:501.6px;top:433.5px;width:12px;height:12px;"></div>
<div class="abs dot" style="left:504.6px;top:436.5px;width:6px;height:6px;"></div>
<div class="abs t" style="left:516.2px;top:433.7px;"><u>F</u>it to printer margins</div>
<div class="abs rd" style="left:501.6px;top:458.5px;width:12px;height:12px;"></div>
<div class="abs t" style="left:516.2px;top:458.7px;">Re<u>d</u>uce to printer margins</div>
<div class="abs rd" style="left:501.6px;top:483.0px;width:12px;height:12px;"></div>
<div class="abs t" style="left:516.2px;top:483.2px;">Custom scale</div>
<div class="abs cb" style="left:501.3px;top:507.0px;width:12px;height:12px;"></div>
<div class="abs t" style="left:516.2px;top:507.2px;">Choose paper source by PDF page si<u>z</u>e</div>
<div class="abs gb" style="left:832px;top:354px;width:219px;height:58px;"></div>
<div class="abs t lg" style="left:838px;top:347.7px;">Orientation</div>
<div class="abs combo" style="left:842px;top:377px;width:179px;height:22px;line-height:20px;padding-left:4px;padding-top:0.7px">Auto portrait/landscape</div>
<svg style="left:1008px;top:385.5px" width="9" height="6" viewBox="0 0 9 6"><path d="M0.5 0.8L4.5 4.8L8.5 0.8" stroke="#444" stroke-width="1" fill="none"/></svg>
<div class="abs gb" style="left:832px;top:425px;width:219px;height:67px;"></div>
<div class="abs t lg" style="left:838px;top:418.7px;">Print <u>W</u>hat</div>
<div class="abs combo" style="left:842px;top:437px;width:179px;height:22px;line-height:20px;padding-left:4px;padding-top:0.7px">Document and markups</div>
<svg style="left:1008px;top:445.5px" width="9" height="6" viewBox="0 0 9 6"><path d="M0.5 0.8L4.5 4.8L8.5 0.8" stroke="#444" stroke-width="1" fill="none"/></svg>
<div class="abs btn" style="left:843px;top:462px;width:134px;height:21px;line-height:19px;padding-top:0.7px;">Summarize Comments</div>
<div class="abs gb" style="left:832px;top:505px;width:219px;height:45px;"></div>
<div class="abs t lg" style="left:838px;top:498.7px;">Output</div>
<div class="abs cb" style="left:841.5px;top:524.0px;width:12px;height:12px;"></div>
<div class="abs t" style="left:856px;top:524.2px;">Simulate Overprinting</div>
<div class="abs btn" style="left:881px;top:561.5px;width:78px;height:21.5px;line-height:19.5px;padding-top:0.7px;border:1px solid #5b8fc4;background:#dfeaf5">OK</div>
<div class="abs btn" style="left:973px;top:561.5px;width:77px;height:21.5px;line-height:19.5px;padding-top:0.7px;border:1px solid #86b3e0;background:#e6eff8">Cancel</div>
<div class="abs" style="left:309px;top:549px;width:537px;height:78px;background:rgba(255,255,205,0.74)"></div>
<div class="abs" style="left:313px;top:549.5px;font-family:'DejaVu Sans Condensed','DejaVu Sans',sans-serif;font-size:31.2px;color:#ff0000;height:38px;line-height:38px;letter-spacing:0.08px">Nhấn ok</div>
<div class="abs" style="left:313px;top:587.2px;font-family:'DejaVu Sans Condensed','DejaVu Sans',sans-serif;font-size:31.2px;color:#ff0000;height:38px;line-height:38px;letter-spacing:0.08px">và máy sẽ chuyển lệnh in đến máy in</div>
<div class="abs" style="left:866px;top:549.5px;width:107.5px;height:49px;border:4.5px solid #f8060a;border-radius:2.5px"></div>
<svg style="left:917.5px;top:572px;" width="13" height="20" viewBox="0 0 13 20"><path d="M0.700 0.700V15.500L4.200 12.300L6.700 18.300L9 17.300L6.500 11.500H11.300Z" fill="#fff" stroke="#222" stroke-width="1" stroke-linejoin="round"/></svg>
<svg style="left:1160px;top:535px" width="58" height="124" viewBox="0 0 58 124">
<path d="M3 14Q3 10.500 6.500 10.500H13.500Q18 2.500 29 2.500Q40 2.500 44.500 10.500H52Q55.500 10.500 55.500 14V104Q55.500 121 29.500 123Q3 121 3 104Z" fill="#fff"/>
<path d="M6.500 15.500Q6.500 14 8.500 14H16.500Q20 6.500 29 6.500Q38 6.500 41.500 14H50Q52 14 52 15.500V89H6.500Z" fill="#1c3a78"/>
<circle cx="28.800" cy="9.600" r="3.300" fill="#fff"/><circle cx="28.800" cy="9.600" r="1.700" fill="#1c3a78"/>
<path d="M9 17.500H49M9 17.500V24" stroke="#fff" stroke-width="1.300" fill="none"/>
<text x="8.500" y="52" font-family="DejaVu Sans Condensed, DejaVu Sans, sans-serif" font-weight="bold" font-size="44" fill="#fff" stroke="#fff" stroke-width="1.300" textLength="42" lengthAdjust="spacingAndGlyphs">ViệT</text>
<text x="8.500" y="86.500" font-family="DejaVu Sans Condensed, DejaVu Sans, sans-serif" font-weight="bold" font-size="41" fill="#fff" stroke="#fff" stroke-width="1.300" textLength="42" lengthAdjust="spacingAndGlyphs">LạC</text>
<g fill="none" stroke="#1c3a78" stroke-width="1.900" stroke-linecap="round" stroke-linejoin="round">
<path d="M6.500 92V104Q7 113 14 117Q21 121 29 121.500Q40 121 47 116Q53 111 53.500 97"/>
<path d="M10 96Q9 106 13.500 107Q17 107 16.500 103.500Q16 100.500 13.500 101Q12 101.500 12.500 103.500"/>
<path d="M12 110.500Q14 115.500 19 114.500Q22 113.500 21 111Q20 109 17.500 109.500Q16 110 16.500 112"/>
<path d="M22 91Q26 96 24 101Q22 103.500 20.500 101"/>
<path d="M31 91.500Q31 88.500 34 88.800Q36.500 89.200 36.300 91.500Q36 93.500 34 93.300"/>
<path d="M29 95.500Q40 95 50.500 88.500M29 99Q41 98 51 92M29 102.500Q42 101 51 95.500"/>
<path d="M28.500 107Q44 106 53 98"/>
<path d="M44 104.500V107.500M47 103V106.500M50 101V105"/>
<path d="M31 113.500Q31 109.500 35 109.500Q38.500 110 38 113Q37.500 115 35.500 114.500M38 113Q43 108 48 109Q51 110 50 112.500Q49 114 47 113"/>
<path d="M23 106Q23 114 28 118M27 108Q27 113 31 117"/>
</g>
</svg>
</body>
</html>
